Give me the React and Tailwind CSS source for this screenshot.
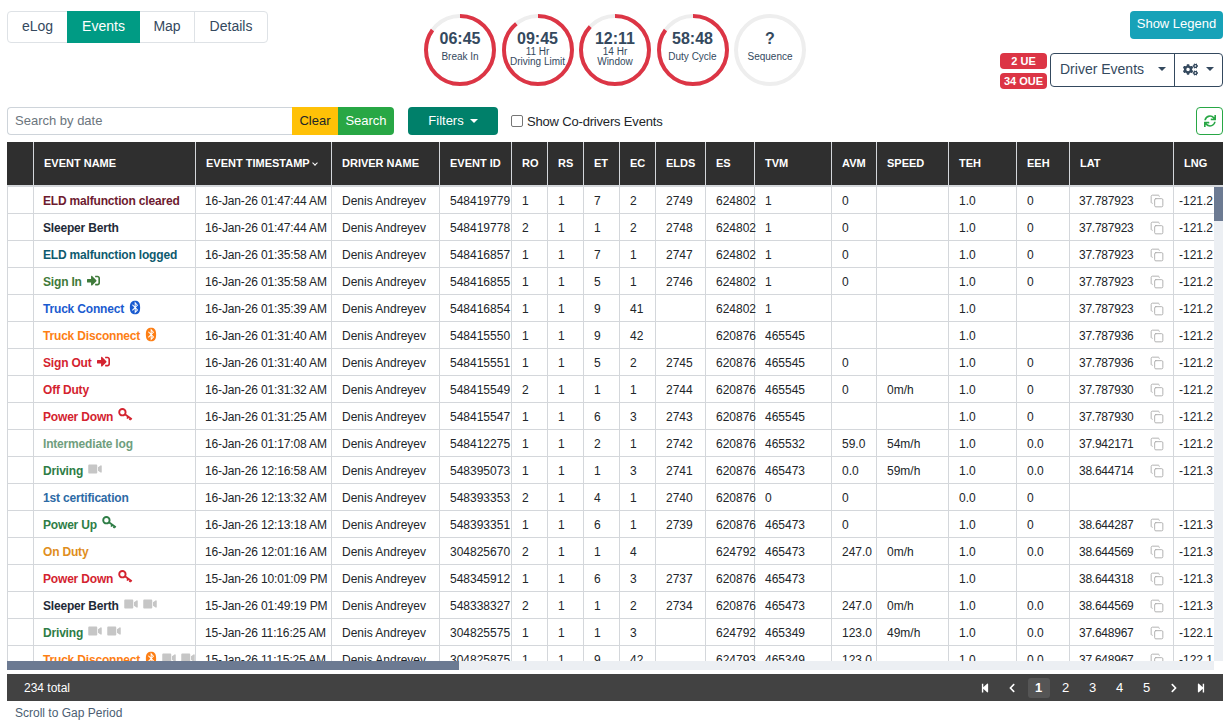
import React from 'react';
import { Copy } from 'lucide-react';
import {
    FaBluetooth, FaCogs, FaChevronLeft, FaChevronRight, FaSignInAlt, FaStepBackward,
    FaStepForward, FaSync, FaVideo,
} from 'react-icons/fa';

const COLORS = {
    cleared: 'text-[#6d1b2f]',
    sleeper: 'text-[#1f2a37]',
    logged: 'text-[#0e5a6e]',
    signIn: 'text-[#3f7a3a]',
    connect: 'text-[#1a5bd0]',
    disconnect: 'text-[#fd7e14]',
    red: 'text-[#d4232f]',
    intermediate: 'text-[#6f9e7e]',
    green: 'text-[#2e7d46]',
    cert: 'text-[#2d6aa5]',
    onDuty: 'text-[#e08e1c]',
};

const COLUMNS = [
    ['', 'w-[27px]'], ['EVENT NAME', 'w-[162px]'], ['EVENT TIMESTAMP', 'w-[136px]'], ['DRIVER NAME', 'w-[108px]'],
    ['EVENT ID', 'w-[72px]'], ['RO', 'w-[36px]'], ['RS', 'w-[36px]'], ['ET', 'w-[36px]'], ['EC', 'w-[36px]'],
    ['ELDS', 'w-[50px]'], ['ES', 'w-[49px]'], ['TVM', 'w-[77px]'], ['AVM', 'w-[45px]'], ['SPEED', 'w-[72px]'],
    ['TEH', 'w-[68px]'], ['EEH', 'w-[53px]'], ['LAT', 'w-[104px]'], ['LNG', 'w-[100px]'],
];

const ROWS = [
    ['ELD malfunction cleared', 'cleared', [], '16-Jan-26 01:47:44 AM', '548419779', 1, 1, 7, 2, 2749, 624802, 1, 0, '', '1.0', 0, '37.787923', '-121.2'],
    ['Sleeper Berth', 'sleeper', [], '16-Jan-26 01:47:44 AM', '548419778', 2, 1, 1, 2, 2748, 624802, 1, 0, '', '1.0', 0, '37.787923', '-121.2'],
    ['ELD malfunction logged', 'logged', [], '16-Jan-26 01:35:58 AM', '548416857', 1, 1, 7, 1, 2747, 624802, 1, 0, '', '1.0', 0, '37.787923', '-121.2'],
    ['Sign In', 'signIn', ['signin'], '16-Jan-26 01:35:58 AM', '548416855', 1, 1, 5, 1, 2746, 624802, 1, 0, '', '1.0', 0, '37.787923', '-121.2'],
    ['Truck Connect', 'connect', ['bt'], '16-Jan-26 01:35:39 AM', '548416854', 1, 1, 9, 41, '', 624802, 1, '', '', '1.0', '', '37.787923', '-121.2'],
    ['Truck Disconnect', 'disconnect', ['bt'], '16-Jan-26 01:31:40 AM', '548415550', 1, 1, 9, 42, '', 620876, 465545, '', '', '1.0', '', '37.787936', '-121.2'],
    ['Sign Out', 'red', ['signin'], '16-Jan-26 01:31:40 AM', '548415551', 1, 1, 5, 2, 2745, 620876, 465545, 0, '', '1.0', 0, '37.787936', '-121.2'],
    ['Off Duty', 'red', [], '16-Jan-26 01:31:32 AM', '548415549', 2, 1, 1, 1, 2744, 620876, 465545, 0, '0m/h', '1.0', 0, '37.787930', '-121.2'],
    ['Power Down', 'red', ['key'], '16-Jan-26 01:31:25 AM', '548415547', 1, 1, 6, 3, 2743, 620876, 465545, '', '', '1.0', 0, '37.787930', '-121.2'],
    ['Intermediate log', 'intermediate', [], '16-Jan-26 01:17:08 AM', '548412275', 1, 1, 2, 1, 2742, 620876, 465532, '59.0', '54m/h', '1.0', '0.0', '37.942171', '-121.2'],
    ['Driving', 'green', ['video'], '16-Jan-26 12:16:58 AM', '548395073', 1, 1, 1, 3, 2741, 620876, 465473, '0.0', '59m/h', '1.0', '0.0', '38.644714', '-121.3'],
    ['1st certification', 'cert', [], '16-Jan-26 12:13:32 AM', '548393353', 2, 1, 4, 1, 2740, 620876, 0, 0, '', '0.0', 0, '', ''],
    ['Power Up', 'green', ['key'], '16-Jan-26 12:13:18 AM', '548393351', 1, 1, 6, 1, 2739, 620876, 465473, 0, '', '1.0', 0, '38.644287', '-121.3'],
    ['On Duty', 'onDuty', [], '16-Jan-26 12:01:16 AM', '304825670', 2, 1, 1, 4, '', 624792, 465473, '247.0', '0m/h', '1.0', '0.0', '38.644569', '-121.3'],
    ['Power Down', 'red', ['key'], '15-Jan-26 10:01:09 PM', '548345912', 1, 1, 6, 3, 2737, 620876, 465473, '', '', '1.0', '', '38.644318', '-121.3'],
    ['Sleeper Berth', 'sleeper', ['video', 'video'], '15-Jan-26 01:49:19 PM', '548338327', 2, 1, 1, 2, 2734, 620876, 465473, '247.0', '0m/h', '1.0', '0.0', '38.644569', '-121.3'],
    ['Driving', 'green', ['video', 'video'], '15-Jan-26 11:16:25 AM', '304825575', 1, 1, 1, 3, '', 624792, 465349, '123.0', '49m/h', '1.0', '0.0', '37.648967', '-122.1'],
    ['Truck Disconnect', 'disconnect', ['bt', 'video', 'video'], '15-Jan-26 11:15:25 AM', '304825875', 1, 1, 9, 42, '', 624793, 465349, '123.0', '', '1.0', '0.0', '37.648967', '-122.1'],
];

const TIMERS = [
    { time: '06:45', lines: ['Break In'], pct: 85 },
    { time: '09:45', lines: ['11 Hr', 'Driving Limit'], pct: 89 },
    { time: '12:11', lines: ['14 Hr', 'Window'], pct: 87 },
    { time: '58:48', lines: ['Duty Cycle'], pct: 85 },
    { time: '?', lines: ['Sequence'], pct: 0 },
];

function KeyIcon() {
    return (
        <svg viewBox="0 0 15 13" className="w-[15px] h-[13px]" fill="none" stroke="currentColor">
            <circle cx="4.4" cy="4.2" r="3.2" strokeWidth="1.9" />
            <path d="M6.9 6.3 13.8 11.2M10.2 8.8 9.2 10.6M12.5 10.4 11.7 12.2" strokeWidth="1.8" />
        </svg>
    );
}

function EventIcon({ type }) {
    if (type === 'signin') return <FaSignInAlt className="shrink-0 w-[13px] h-[13px] -mt-[3px]" />;
    if (type === 'bt') return <FaBluetooth className="shrink-0 w-[12px] h-[15px] -mt-[3px]" />;
    if (type === 'key') return <span className="shrink-0 -mt-[4px]"><KeyIcon /></span>;
    return <FaVideo className="shrink-0 w-[14px] h-[12px] -mt-[3px] text-[#c6c6c6]" />;
}

function Timer({ time, lines, pct }) {
    return (
        <div className="relative w-[72px] h-[72px] flex flex-col items-center pt-[16px] text-[#34495e]">
            <svg viewBox="0 0 72 72" className="absolute inset-0 -rotate-90">
                <circle cx="36" cy="36" r="34" fill="none" stroke="#eeeeee" strokeWidth="4" />
                {pct > 0 && (
                    <circle cx="36" cy="36" r="34" fill="none" stroke="#dc3545" strokeWidth="4" pathLength="100" strokeDasharray={`${pct} 100`} />
                )}
            </svg>
            <div className="relative text-[16px] leading-[18px] font-bold">{time}</div>
            <div className="relative h-[20px] -mt-[1px] flex flex-col justify-center items-center">
                {lines.map((line) => (
                    <div key={line} className="text-[10px] leading-[10px] whitespace-nowrap">{line}</div>
                ))}
            </div>
        </div>
    );
}

function Caret({ className = '' }) {
    return <span className={`inline-block w-0 h-0 border-x-[4px] border-x-transparent border-t-[4px] ${className}`} />;
}

export default function App() {
    return (
        <div className="w-[1230px] h-[727px] overflow-hidden bg-white px-[7px] pt-[11px] font-['Liberation_Sans',Arial,sans-serif] text-[#212529]">
            {/* top bar */}
            <div className="flex items-start h-[85px]">
                <div className="flex w-[261px] h-[32px] border border-[#dee2e6] rounded text-[14px] text-[#34495e]">
                    <div className="w-[59px] flex items-center justify-center pb-[2px]">eLog</div>
                    <div className="w-[73px] -my-px flex items-center justify-center bg-[#009b84] text-white pb-[2px]">Events</div>
                    <div className="w-[55px] flex items-center justify-center border-r border-[#dee2e6] pb-[2px]">Map</div>
                    <div className="flex-1 flex items-center justify-center pb-[2px]">Details</div>
                </div>
                <div className="flex gap-[5.5px] mt-[3px] ml-[156px]">
                    {TIMERS.map((t) => <Timer key={t.time} {...t} />)}
                </div>
                <div className="flex flex-col items-end w-[223px] ml-auto">
                    <button className="w-[93px] h-[28px] bg-[#17a2b8] text-white text-[13px] rounded pb-[3px]">Show Legend</button>
                    <div className="flex gap-[3px] mt-[14px]">
                        <div className="flex flex-col gap-[4px]">
                            <span className="w-[47px] h-[16px] bg-[#dc3545] rounded text-white text-[11px] font-bold leading-[16px] text-center">2 UE</span>
                            <span className="w-[47px] h-[16px] bg-[#dc3545] rounded text-white text-[11px] font-bold leading-[16px] text-center">34 OUE</span>
                        </div>
                        <div className="flex w-[173px] h-[34px] border border-[#34495e] rounded text-[#34495e]">
                            <div className="w-[124px] flex items-center justify-between pl-[9px] pr-[8px] pb-[2px] text-[14px] border-r border-[#34495e]">
                                Driver Events
                                <Caret className="border-t-[#34495e]" />
                            </div>
                            <div className="flex-1 flex items-center pl-[8px] gap-[8px] pb-[2px]">
                                <FaCogs className="w-[15px] h-[15px]" />
                                <Caret className="border-t-[#34495e]" />
                            </div>
                        </div>
                    </div>
                </div>
            </div>

            {/* search row */}
            <div className="flex items-center mt-[11px] h-[28px]">
                <div className="flex w-[387px] h-[28px] text-[13px]">
                    <div className="flex-1 border border-[#ced4da] border-r-0 rounded-l pl-[7px] flex items-center text-[#6c757d] text-[13px]">Search by date</div>
                    <div className="w-[46px] bg-[#ffc107] flex items-center justify-center">Clear</div>
                    <div className="w-[56px] bg-[#28a745] text-white rounded-r flex items-center justify-center">Search</div>
                </div>
                <button className="ml-[14px] w-[90px] h-[28px] bg-[#00806a] text-white text-[13px] rounded flex items-center justify-center gap-[6px]">
                    Filters
                    <Caret className="border-t-white" />
                </button>
                <span className="ml-[13px] w-[12px] h-[12px] border border-[#767676] rounded-[2px]" />
                <span className="ml-[4px] text-[13px] tracking-[-0.18px] pt-[2px]">Show Co-drivers Events</span>
                <button className="ml-auto w-[27px] h-[28px] border border-[#28a745] rounded flex items-center justify-center text-[#28a745]">
                    <FaSync className="w-[12px] h-[12px]" />
                </button>
            </div>

            {/* events table */}
            <div className="relative mt-[7px] h-[519px] overflow-hidden">
                <table className="table-fixed border-separate border-spacing-0 w-[1267px] text-[12px]">
                    <colgroup>
                        {COLUMNS.map(([name, w]) => <col key={name} className={w} />)}
                    </colgroup>
                    <thead>
                        <tr className="bg-[#2f2f2f] text-white text-[11px] font-bold text-left">
                            {COLUMNS.map(([name]) => (
                                <th key={name} className="h-[45px] px-[10px] border-r border-b-2 border-r-[#d4d7db] border-b-[#d4d7db] whitespace-nowrap font-bold">
                                    {name}
                                    {name === 'EVENT TIMESTAMP' && <span className="inline-block ml-[3px] mb-[2px] w-[4px] h-[4px] border-r border-b border-white rotate-45" />}
                                </th>
                            ))}
                        </tr>
                    </thead>
                    <tbody>
                        {ROWS.map((row, i) => {
                            const [name, color, icons, stamp, ...rest] = row;
                            const lat = rest[rest.length - 2];
                            const cell = 'h-[27px] pl-[10px] pr-[10px] pt-[1px] border-r border-b border-[#d4d7db] whitespace-nowrap';
                            return (
                                <tr key={i}>
                                    <td className={`${cell} border-l`} />
                                    <td className={`${cell} !pl-[9px] !pr-0`}>
                                        <div className={`flex items-center gap-[5px] font-bold tracking-[-0.18px] ${COLORS[color]}`}>
                                            {name}
                                            {icons.map((type, n) => <EventIcon key={n} type={type} />)}
                                        </div>
                                    </td>
                                    <td className={`${cell} !pl-[9px] tracking-[-0.14px]`}>{stamp}</td>
                                    <td className={`${cell} !pl-[10px]`}>Denis Andreyev</td>
                                    {rest.slice(0, -2).map((value, n) => <td key={n} className={cell}>{value}</td>)}
                                    <td className={`${cell} !pl-[9px] !pr-[9px]`}>
                                        <div className="flex items-center justify-between tracking-[-0.25px]">
                                            {lat}
                                            {lat && <Copy className="w-[14px] h-[14px] text-[#a8a8a8]" strokeWidth={1.5} />}
                                        </div>
                                    </td>
                                    <td className={`${cell} !pl-[5px]`}>{rest[rest.length - 1]}</td>
                                </tr>
                            );
                        })}
                    </tbody>
                </table>
                {/* vertical scrollbar */}
                <div className="absolute right-0 top-[45px] bottom-0 w-[9px] bg-[#eceff3]">
                    <div className="h-[34px] bg-[#6c7a92]" />
                </div>
            </div>

            {/* horizontal scrollbar */}
            <div className="w-[1207px] h-[9px] bg-[#eceff3]">
                <div className="w-[452px] h-[9px] bg-[#6c7a92]" />
            </div>

            {/* footer */}
            <div className="mt-[4px] h-[27px] bg-[#424242] text-white text-[12px] flex items-center pl-[17px] pr-[9px]">
                234 total
                <div className="ml-auto flex items-center text-[13px]">
                    <span className="w-[27px] flex justify-center"><FaStepBackward className="w-[10px] h-[10px]" /></span>
                    <span className="w-[27px] flex justify-center"><FaChevronLeft className="w-[10px] h-[10px]" /></span>
                    <span className="w-[27px] flex justify-center"><span className="w-[22px] h-[20px] bg-[#555555] rounded-[3px] flex items-center justify-center font-bold">1</span></span>
                    {[2, 3, 4, 5].map((n) => <span key={n} className="w-[27px] text-center">{n}</span>)}
                    <span className="w-[27px] flex justify-center"><FaChevronRight className="w-[10px] h-[10px]" /></span>
                    <span className="w-[27px] flex justify-center"><FaStepForward className="w-[10px] h-[10px]" /></span>
                </div>
            </div>

            <div className="pl-[8px] mt-[5px] text-[12px] leading-[14px] text-[#4b5e73]">Scroll to Gap Period</div>
        </div>
    );
}
